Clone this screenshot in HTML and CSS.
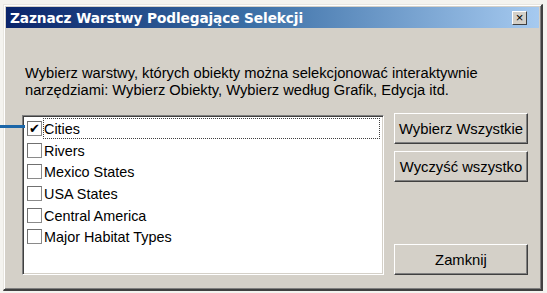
FILE: index.html
```html
<!DOCTYPE html>
<html>
    <head>
        <meta charset="utf-8">
        <title>Zaznacz Warstwy Podlegające Selekcji</title>
        <link rel="stylesheet" href="styles.css">
    </head>
    <body>
        <div class="pointer"></div>
        <div class="dialog">
            <div class="titlebar">
                <span class="title">Zaznacz Warstwy Podlegające Selekcji</span>
                <span class="close">&#215;</span>
            </div>
            <div class="content">
                <p class="info">Wybierz warstwy, których obiekty można selekcjonować interaktywnie<br>narzędziami: Wybierz Obiekty, Wybierz według Grafik, Edycja itd.</p>
                <div class="main">
                    <div class="list">
                        <div class="item focus"><span class="check on">&#10004;</span><span class="label">Cities</span></div>
                        <div class="item"><span class="check"></span><span class="label">Rivers</span></div>
                        <div class="item"><span class="check"></span><span class="label">Mexico States</span></div>
                        <div class="item"><span class="check"></span><span class="label">USA States</span></div>
                        <div class="item"><span class="check"></span><span class="label">Central America</span></div>
                        <div class="item"><span class="check"></span><span class="label">Major Habitat Types</span></div>
                    </div>
                    <div class="buttons">
                        <button class="btn">Wybierz Wszystkie</button>
                        <button class="btn">Wyczyść wszystko</button>
                        <button class="btn last">Zamknij</button>
                    </div>
                </div>
            </div>
        </div>
    </body>
</html>
```

FILE: styles.css
```css
* {
    margin: 0;
    padding: 0;
    box-sizing: border-box;
}
body {
    background: #f4f3ef;
    font-family: "Liberation Sans", Arial, sans-serif;
    font-size: 14px;
    color: #000;
    width: 547px;
    height: 293px;
    overflow: hidden;
}
.pointer {
    position: absolute;
    left: 0;
    top: 125px;
    width: 25px;
    height: 3px;
    background: #1b66a8;
}
.dialog {
    margin: 4px 0 0 3px;
    width: 540px;
    height: 287px;
    background: #d4d0c8;
    border-top: 1px solid #e8e6e0;
    border-left: 1px solid #e8e6e0;
    border-right: 2px solid #404040;
    border-bottom: 2px solid #404040;
    box-shadow: inset 1px 1px 0 #ffffff, inset -1px -1px 0 #808080;
    padding: 2px;
    display: flex;
    flex-direction: column;
}
.titlebar {
    height: 21px;
    background: linear-gradient(to right, #0a246a 0%, #3a6ea5 45%, #a6caf0 100%);
    display: flex;
    align-items: center;
    justify-content: space-between;
    padding: 0 12px 0 4px;
}
.title {
    color: #fff;
    font-family: "DejaVu Sans", Verdana, sans-serif;
    font-weight: bold;
    font-size: 13.7px;
    letter-spacing: -0.1px;
}
.close {
    width: 15px;
    height: 14px;
    background: #d4d0c8;
    border-top: 1px solid #fff;
    border-left: 1px solid #fff;
    border-right: 1px solid #404040;
    border-bottom: 1px solid #404040;
    font-size: 13px;
    line-height: 11px;
    text-align: center;
    color: #000;
}
.content {
    flex: 1;
    padding: 37px 0 0 16px;
    display: flex;
    flex-direction: column;
}
.info {
    line-height: 17px;
    padding-left: 3px;
    font-size: 14.7px;
    white-space: nowrap;
}
.main {
    margin-top: 16px;
    display: flex;
    gap: 10px;
}
.list {
    width: 362px;
    height: 160px;
    background: #fff;
    border-top: 1px solid #808080;
    border-left: 1px solid #808080;
    border-right: 1px solid #fff;
    border-bottom: 1px solid #fff;
    box-shadow: inset 1px 1px 0 #404040, inset -1px -1px 0 #d4d0c8;
    padding: 2px 3px 0 4px;
    font-size: 14.4px;
}
.item {
    height: 21.6px;
    display: flex;
    align-items: center;
}
.check {
    width: 15px;
    height: 15px;
    flex: none;
    border: 1px solid #8a8a8a;
    border-top-color: #707070;
    border-left-color: #707070;
    background: #fff;
    margin-right: 1px;
    font-size: 13px;
    line-height: 13px;
    text-align: center;
    color: #000;
    font-family: "DejaVu Sans", sans-serif;
}
.label {
    flex: 1;
    height: 21px;
    line-height: 20px;
    border: 1px dotted transparent;
}
.focus .label {
    border-color: #404040;
}
.buttons {
    width: 134px;
    display: flex;
    flex-direction: column;
    gap: 7px;
    margin-top: -2px;
}
.btn {
    height: 31px;
    font-family: "Liberation Sans", Arial, sans-serif;
    font-size: 14.8px;
    color: #000;
    background: #d4d0c8;
    border-top: 1px solid #fff;
    border-left: 1px solid #fff;
    border-right: 1px solid #404040;
    border-bottom: 1px solid #404040;
    box-shadow: inset -1px -1px 0 #808080;
    white-space: nowrap;
}
.btn.last {
    margin-top: auto;
}
```
